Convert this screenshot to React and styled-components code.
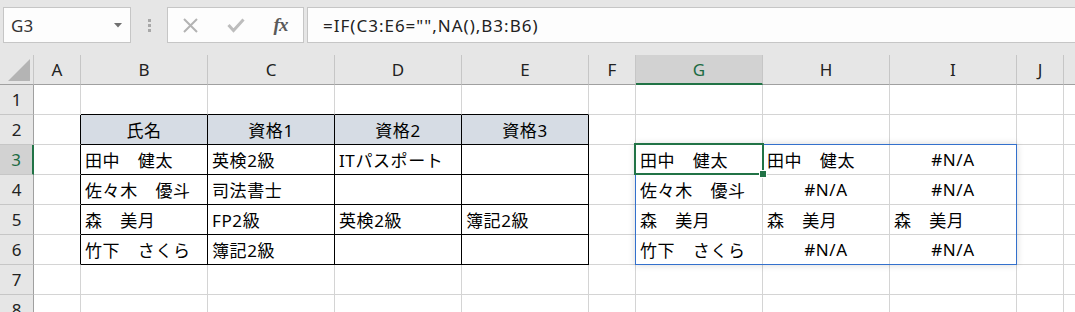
import React from 'react'
import styled, { createGlobalStyle } from 'styled-components'

// GLOBAL
const GlobalStyle = createGlobalStyle`
  html, body {
    margin: 0;
    padding: 0;
    background: #ffffff;
    overflow: hidden;
  }
  body {
    font-family: "Noto Sans", "Noto Sans CJK JP", sans-serif;
    color: #000;
  }
`

// DATA
const COLUMNS = ['A', 'B', 'C', 'D', 'E', 'F', 'G', 'H', 'I', 'J', 'K']
const WIDTHS = ['47px', '127px', '127px', '127px', '127px', '47px', '127px', '127px', '127px', '47px', '127px']
const ROWS = [1, 2, 3, 4, 5, 6, 7, 8]
const ACTIVE_COL = 'G'
const ACTIVE_ROW = 3
const LAST_VISIBLE_COL = 'J' // K lies past the window edge

const VALUES = {
  B2: { text: '氏名', align: 'center' },
  C2: { text: '資格1', align: 'center' },
  D2: { text: '資格2', align: 'center' },
  E2: { text: '資格3', align: 'center' },
  B3: { text: '田中　健太' },
  C3: { text: '英検2級' },
  D3: { text: 'ITパスポート' },
  B4: { text: '佐々木　優斗' },
  C4: { text: '司法書士' },
  B5: { text: '森　美月' },
  C5: { text: 'FP2級' },
  D5: { text: '英検2級' },
  E5: { text: '簿記2級' },
  B6: { text: '竹下　さくら' },
  C6: { text: '簿記2級' },
  G3: { text: '田中　健太' },
  H3: { text: '田中　健太' },
  I3: { text: '#N/A', align: 'center' },
  G4: { text: '佐々木　優斗' },
  H4: { text: '#N/A', align: 'center' },
  I4: { text: '#N/A', align: 'center' },
  G5: { text: '森　美月' },
  H5: { text: '森　美月' },
  I5: { text: '森　美月' },
  G6: { text: '竹下　さくら' },
  H6: { text: '#N/A', align: 'center' },
  I6: { text: '#N/A', align: 'center' },
}

const inTableCols = (c) => ['B', 'C', 'D', 'E'].includes(c)
const inTableRows = (r) => r >= 2 && r <= 6

// STYLES
const Page = styled.div`
  width: 100%;
  height: 312px;
  overflow: hidden;
`

const Toolbar = styled.div`
  display: flex;
  align-items: flex-start;
  height: 55px;
  box-sizing: border-box;
  padding: 7px 0 0 3px;
  background: #e6e6e6;
  overflow: hidden;
`

const Box = styled.div`
  height: 36px;
  box-sizing: border-box;
  border: 1px solid #c6c6c6;
  background: #fdfdfd;
  display: flex;
  align-items: center;
`

const NameBox = styled(Box)`
  width: 128px;
  justify-content: space-between;
  padding: 0 8px 0 7px;
  font-size: 17px;
  color: #333;
`

const Grip = styled.div`
  width: 36px;
  height: 36px;
  display: flex;
  flex-direction: column;
  align-items: center;
  justify-content: center;
  gap: 2px;

  span {
    width: 3px;
    height: 3px;
    background: #a8a8a8;
  }
`

const FxButtons = styled(Box)`
  width: 137px;
  padding-left: 0;
`

const FxSlot = styled.div`
  width: 45px;
  height: 100%;
  display: flex;
  align-items: center;
  justify-content: center;
`

const FxLabel = styled.span`
  font-family: "Liberation Serif", "DejaVu Serif", serif;
  font-style: italic;
  font-weight: bold;
  font-size: 19px;
  color: #5a5a5a;
  letter-spacing: -1px;
`

const FormulaBox = styled(Box)`
  flex: 1;
  margin-left: 3px;
  margin-right: -10px;
  padding-left: 15px;
  font-size: 17px;
  color: #222;
  letter-spacing: 1px;
`

const Sheet = styled.div`
  display: grid;
  overflow: hidden;
`

const Layer = styled.div`
  grid-area: 1 / 1;
  display: grid;
  grid-template-columns: 34px ${WIDTHS.join(' ')};
  grid-auto-rows: 30px;
  pointer-events: ${(p) => (p.$overlay ? 'none' : 'auto')};
`

const Corner = styled.div`
  background: #e6e6e6;
  box-sizing: border-box;
  border-right: 1px solid #c6c6c6;
  border-bottom: 1px solid #a0a0a0;
  display: flex;
  justify-content: flex-end;
  align-items: flex-end;
  padding: 0 3px 3px 0;
`

const ColHead = styled.div`
  box-sizing: border-box;
  background: ${(p) => (p.$active ? '#d2d2d2' : '#e6e6e6')};
  border-right: 1px solid #c6c6c6;
  border-bottom: ${(p) => (p.$active ? '2px solid #217346' : '1px solid #a0a0a0')};
  color: ${(p) => (p.$active ? '#1d6b43' : '#222')};
  display: flex;
  align-items: center;
  justify-content: center;
  font-size: 17px;
  padding-bottom: ${(p) => (p.$active ? '0' : '1px')};
`

const RowHead = styled.div`
  box-sizing: border-box;
  background: ${(p) => (p.$active ? '#d2d2d2' : '#e6e6e6')};
  border-right: ${(p) => (p.$active ? '2px solid #217346' : '1px solid #a0a0a0')};
  border-bottom: 1px solid #c6c6c6;
  color: ${(p) => (p.$active ? '#1d6b43' : '#222')};
  display: flex;
  align-items: center;
  justify-content: center;
  font-size: 17px;
`

const Cell = styled.div`
  box-sizing: border-box;
  background: ${(p) => p.$fill || '#ffffff'};
  border-right: 1px solid ${(p) => p.$rb || '#d4d4d4'};
  border-bottom: 1px solid ${(p) => p.$bb || '#d4d4d4'};
  display: flex;
  align-items: center;
  justify-content: ${(p) => (p.$align === 'center' ? 'center' : 'flex-start')};
  padding: 0 4px;
  font-size: 17px;
  letter-spacing: 0.6px;
  white-space: nowrap;
  overflow: visible;
`

const SpillRange = styled.div`
  grid-column: 8 / 11;
  grid-row: 4 / 8;
  margin: -1px 0 0 -1px;
  border: 1px solid #3370cc;
  box-shadow: 0 0 7px rgba(0, 0, 0, 0.16);
`

const Selection = styled.div`
  grid-column: 8 / 9;
  grid-row: 4 / 5;
  margin: -2px -1px 0 -2px;
  border: 2px solid #217346;
  position: relative;
`

const FillHandle = styled.div`
  position: absolute;
  right: -4px;
  bottom: -4px;
  width: 6px;
  height: 6px;
  background: #217346;
  box-shadow: 0 0 0 1px #ffffff;
`

// ICONS
const Caret = () => (
  <svg width="8" height="5" viewBox="0 0 8 5">
    <path d="M0 0 L8 0 L4 4.5 Z" fill="#707070" />
  </svg>
)

const CancelIcon = () => (
  <svg width="17" height="17" viewBox="0 0 17 17">
    <path d="M2 2 L15 15 M15 2 L2 15" stroke="#b3b3b3" strokeWidth="2" fill="none" />
  </svg>
)

const CheckIcon = () => (
  <svg width="18" height="16" viewBox="0 0 18 16">
    <path d="M1.5 8 L6.5 13.5 L16.5 2.5" stroke="#bdbdbd" strokeWidth="3" fill="none" />
  </svg>
)

const CornerMark = () => (
  <svg width="22" height="22" viewBox="0 0 22 22">
    <path d="M22 0 L22 22 L0 22 Z" fill="#b4b4b4" />
  </svg>
)

// TEMPLATE
const App = () => {
  const cells = []
  ROWS.forEach((r) => {
    cells.push(
      <RowHead key={'r' + r} $active={r === ACTIVE_ROW}>{r}</RowHead>
    )
    COLUMNS.forEach((c) => {
      const v = VALUES[c + r] || {}
      const rightBlack = inTableRows(r) && (inTableCols(c) || c === 'A')
      const bottomBlack = inTableCols(c) && r >= 1 && r <= 6
      const headerFill = inTableCols(c) && r === 2
      cells.push(
        <Cell
          key={c + r}
          $align={v.align}
          $rb={rightBlack ? '#000' : null}
          $bb={bottomBlack ? '#000' : null}
          $fill={headerFill ? '#d6dce4' : null}
        >
          {v.text}
        </Cell>
      )
    })
  })

  return (
    <Page>
      <GlobalStyle />
      <Toolbar>
        <NameBox>
          <span>G3</span>
          <Caret />
        </NameBox>
        <Grip>
          <span />
          <span />
          <span />
        </Grip>
        <FxButtons>
          <FxSlot><CancelIcon /></FxSlot>
          <FxSlot><CheckIcon /></FxSlot>
          <FxSlot><FxLabel>fx</FxLabel></FxSlot>
        </FxButtons>
        <FormulaBox>=IF(C3:E6="",NA(),B3:B6)</FormulaBox>
      </Toolbar>
      <Sheet>
        <Layer>
          <Corner><CornerMark /></Corner>
          {COLUMNS.map((c) => (
            <ColHead key={c} $active={c === ACTIVE_COL}>
              {c <= LAST_VISIBLE_COL ? c : null}
            </ColHead>
          ))}
          {cells}
        </Layer>
        <Layer $overlay>
          <SpillRange />
          <Selection>
            <FillHandle />
          </Selection>
        </Layer>
      </Sheet>
    </Page>
  )
}

export default App
